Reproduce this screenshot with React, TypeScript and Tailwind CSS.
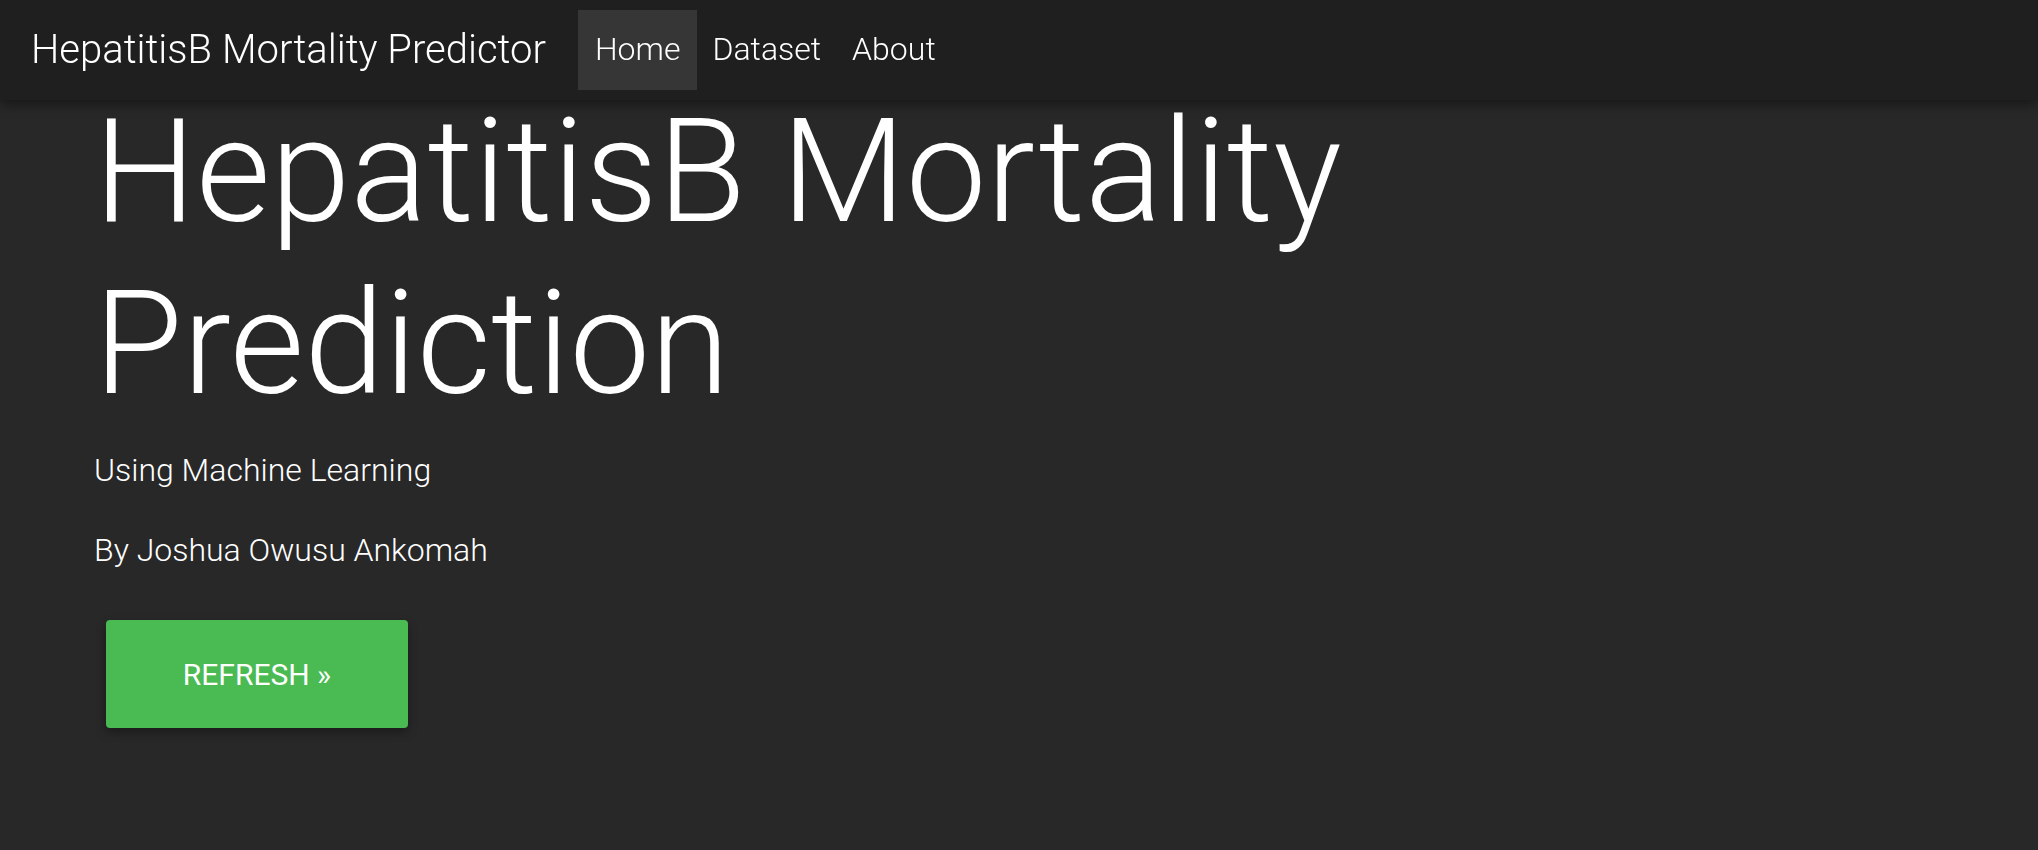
import React from "react";

export default function App() {
  return (
    <div className="min-h-screen w-full bg-[#282828] text-white font-light" style={{ fontFamily: "Roboto, 'Liberation Sans', sans-serif" }}>
      <nav className="fixed top-0 left-0 right-0 z-10 h-[100px] bg-[#1f1f1f] shadow-[0_4px_12px_rgba(0,0,0,0.45)] flex items-center pl-[31px]">
        <a className="text-[40px] leading-none">HepatitisB Mortality Predictor</a>
        <ul className="flex items-center ml-[32px] h-[80px] text-[32px]">
          <li className="h-full flex items-center px-[17px] pb-[2px] bg-[#363636]">Home</li>
          <li className="h-full flex items-center px-[15px] pb-[2px]">Dataset</li>
          <li className="h-full flex items-center px-[16px] pb-[2px]">About</li>
        </ul>
      </nav>
      <main className="pt-[86px] pl-[94px]">
        <h1 className="text-[144px] leading-[172px] font-light">
          HepatitisB Mortality
          <br />
          Prediction
        </h1>
        <p className="mt-[18px] text-[32px] leading-[44px]">Using Machine Learning</p>
        <p className="mt-[36px] text-[32px] leading-[44px]">By Joshua Owusu Ankomah</p>
        <button className="mt-[48px] ml-[12px] w-[302px] h-[108px] rounded-[4px] bg-[#4aba53] text-[30px] font-normal shadow-[0_4px_10px_rgba(0,0,0,0.35)]">
          REFRESH »
        </button>
      </main>
    </div>
  );
}
